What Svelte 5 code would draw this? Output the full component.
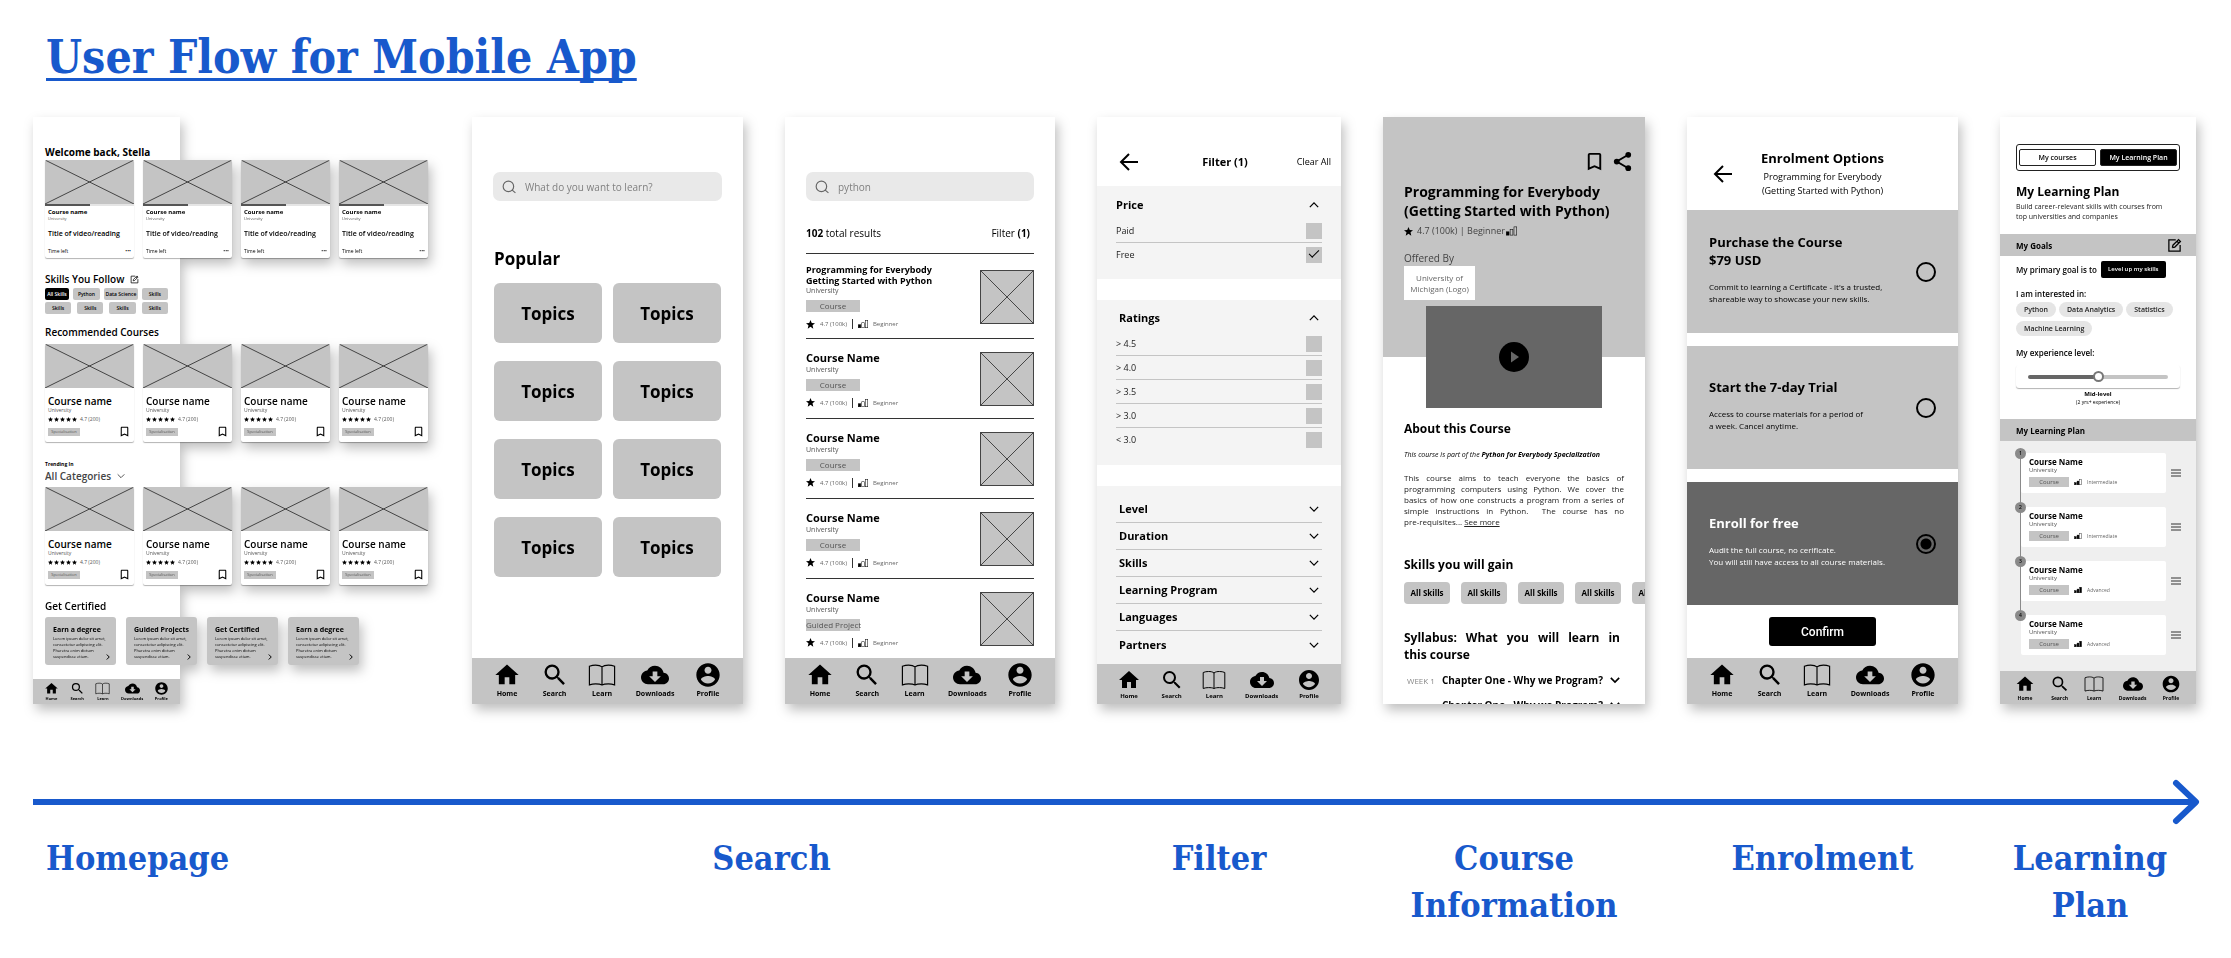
<script lang="ts">
    const navItems = ["Home", "Search", "Learn", "Downloads", "Profile"];

    const follows = [
        ["All Skills", "Python", "Data Science", "Skills"],
        ["Skills", "Skills", "Skills", "Skills"],
    ];
    const certificates = ["Earn a degree", "Guided Projects", "Get Certified", "Earn a degree"];

    const results = [
        { name: "Programming for Everybody Getting Started with Python", type: "Course", long: true },
        { name: "Course Name", type: "Course" },
        { name: "Course Name", type: "Course" },
        { name: "Course Name", type: "Course" },
        { name: "Course Name", type: "Guided Project" },
    ];

    let prices = $state([
        { label: "Paid", checked: false },
        { label: "Free", checked: true },
    ]);
    let ratings = $state([
        { label: "> 4.5", checked: false },
        { label: "> 4.0", checked: false },
        { label: "> 3.5", checked: false },
        { label: "> 3.0", checked: false },
        { label: "< 3.0", checked: false },
    ]);
    const moreFilters = ["Level", "Duration", "Skills", "Learning Program", "Languages", "Partners"];

    const options = [
        {
            id: "purchase",
            title: ["Purchase the Course", "$79 USD"],
            text: ["Commit to learning a Certificate - it's a trusted,", "shareable way to showcase your new skills."],
        },
        {
            id: "trial",
            title: ["Start the 7-day Trial"],
            text: ["Access to course materials for a period of", "a week. Cancel anytime."],
        },
        {
            id: "free",
            title: ["Enroll for free"],
            text: ["Audit the full course, no cerificate.", "You will still have access to all course materials."],
        },
    ];
    let enrolment = $state("free");

    const interests = ["Python", "Data Analytics", "Statistics", "Machine Learning"];
    let experience = $state(50);

    const plan = [
        { level: "Intermediate", bars: 2 },
        { level: "Intermediate", bars: 2 },
        { level: "Advanced", bars: 3 },
        { level: "Advanced", bars: 3 },
    ];
</script>

{#snippet navIcon(name)}
    <svg class="nav-icon" viewBox="0 0 24 24" aria-hidden="true">
        {#if name === "Home"}
            <path d="M10 20v-6h4v6h5v-8h3L12 3 2 12h3v8z" />
        {:else if name === "Search"}
            <path d="M15.5 14h-.79l-.28-.27A6.47 6.47 0 0 0 16 9.5 6.5 6.5 0 1 0 9.5 16c1.61 0 3.09-.59 4.23-1.57l.27.28v.79l5 4.99L20.49 19l-4.99-5zm-6 0a4.5 4.5 0 1 1 0-9 4.5 4.5 0 0 1 0 9z" />
        {:else if name === "Learn"}
            <path
                class="line"
                d="M12 5C10.500 3.700 8.500 3.500 6.500 3.500 4.500 3.500 3 3.800 1.200 4.500V20.500C3 19.900 4.500 19.600 6.500 19.600 8.500 19.600 10.500 19.700 12 20.500 13.500 19.700 15.500 19.600 17.500 19.600 19.500 19.600 21 19.900 22.800 20.500V4.500C21 3.800 19.500 3.500 17.500 3.500 15.500 3.500 13.500 3.700 12 5V20.500"
            />
        {:else if name === "Downloads"}
            <path d="M19.350 10.040C18.670 6.590 15.640 4 12 4 9.110 4 6.600 5.640 5.350 8.040 2.340 8.360 0 10.910 0 14c0 3.310 2.690 6 6 6h13c2.760 0 5-2.240 5-5 0-2.640-2.050-4.780-4.650-4.960zM17 13l-5 5-5-5h3V9h4v4h3z" />
        {:else}
            <path d="M12 2C6.480 2 2 6.480 2 12s4.480 10 10 10 10-4.480 10-10S17.520 2 12 2zm0 3c1.660 0 3 1.340 3 3s-1.340 3-3 3-3-1.340-3-3 1.340-3 3-3zm0 14.200c-2.500 0-4.710-1.280-6-3.220.030-1.990 4-3.080 6-3.080 1.990 0 5.970 1.090 6 3.080-1.290 1.940-3.500 3.220-6 3.220z" />
        {/if}
    </svg>
{/snippet}

{#snippet tabBar()}
    <nav class="tab-bar">
        {#each navItems as item}
            <button>
                {@render navIcon(item)}
                <span>{item}</span>
            </button>
        {/each}
    </nav>
{/snippet}

{#snippet placeholder()}
    <svg class="placeholder" viewBox="0 0 100 100" preserveAspectRatio="none" aria-hidden="true">
        <path d="M0 0L100 100M100 0L0 100" vector-effect="non-scaling-stroke" />
    </svg>
{/snippet}

{#snippet star()}
    <svg class="star" viewBox="0 0 24 24" aria-hidden="true">
        <path d="M12 18.300L19.400 23l-2-8.700L24 8.500l-8.600-.8L12 0 8.600 7.700 0 8.500l6.600 5.800L4.600 23z" />
    </svg>
{/snippet}

{#snippet bookmark()}
    <svg class="bookmark" viewBox="0 0 24 24" aria-hidden="true">
        <path d="M17 3H7c-1.100 0-1.990.9-1.990 2L5 21l7-3 7 3V5c0-1.100-.9-2-2-2zm0 15l-5-2.180L7 18V5h10v13z" />
    </svg>
{/snippet}

{#snippet bars(filled)}
    <svg class="bars" viewBox="0 0 20 16" aria-hidden="true">
        <rect x="0.500" y="9.500" width="5" height="6" class:filled={filled > 0} />
        <rect x="7.500" y="5.500" width="5" height="10" class:filled={filled > 1} />
        <rect x="14.500" y="0.500" width="5" height="15" class:filled={filled > 2} />
    </svg>
{/snippet}

{#snippet chevron(up)}
    <svg class="chevron" class:up viewBox="0 0 12 12" aria-hidden="true">
        <path d="M1 3.500L6 8.500L11 3.500" />
    </svg>
{/snippet}

{#snippet backArrow()}
    <svg class="back" viewBox="0 0 20 20" aria-hidden="true">
        <path d="M19 10H2M10 2L2 10L10 18" />
    </svg>
{/snippet}

{#snippet edit()}
    <svg class="edit" viewBox="0 0 24 24" aria-hidden="true">
        <path d="M14 3H3V21H21V11M8.500 15.500L9.500 11.500L18.500 2.500L21.500 5.500L12.500 14.500L8.500 15.500M16 5L19 8" />
    </svg>
{/snippet}

{#snippet courseRow()}
    <div class="card-row">
        {#each Array(4) as _}
            <article class="card course-card">
                {@render placeholder()}
                <h4>Course name</h4>
                <p class="school">University</p>
                <p class="score">
                    {#each Array(5) as _}{@render star()}{/each}
                    <span>4.7 (200)</span>
                </p>
                <div class="foot">
                    <span class="tag">Specialisation</span>
                    <button aria-label="Bookmark">{@render bookmark()}</button>
                </div>
            </article>
        {/each}
    </div>
{/snippet}

{#snippet searchBox(id, text, value)}
    <div class="search-box">
        <label for={id} aria-label="Search courses">
            <svg viewBox="0 0 24 24" aria-hidden="true">
                <circle cx="11" cy="11" r="9" />
                <path d="M17 17L23 22" />
            </svg>
        </label>
        <input {id} type="text" placeholder={text} {value} />
    </div>
{/snippet}

{#snippet checkRow(item)}
    <label class="check-row">
        <span>{item.label}</span>
        <input type="checkbox" bind:checked={item.checked} />
    </label>
{/snippet}

<main>
    <h1>User Flow for Mobile App</h1>

    <div class="screens">
        <section class="screen home">
            <h3>Welcome back, Stella</h3>
            <div class="card-row">
                {#each Array(4) as _}
                    <article class="card video-card">
                        {@render placeholder()}
                        <div class="progress"><div style:width="50%"></div></div>
                        <h4>Course name</h4>
                        <p class="school">University</p>
                        <p class="video">Title of video/reading</p>
                        <div class="foot">
                            <span>Time left</span>
                            <button aria-label="More">•••</button>
                        </div>
                    </article>
                {/each}
            </div>

            <h3 class="skills-title">Skills You Follow {@render edit()}</h3>
            <div class="follows">
                {#each follows as row}
                    <div>
                        {#each row as skill}
                            <button class:active={skill === "All Skills"}>{skill}</button>
                        {/each}
                    </div>
                {/each}
            </div>

            <h3 class="recommended">Recommended Courses</h3>
            {@render courseRow()}

            <label class="trending" for="category">Trending In</label>
            <div class="category">
                <select id="category"><option>All Categories</option></select>
                {@render chevron(false)}
            </div>
            {@render courseRow()}

            <h3 class="certified">Get Certified</h3>
            <div class="card-row certs">
                {#each certificates as title}
                    <article class="cert">
                        <h4>{title}</h4>
                        <p>Lorem ipsum dolor sit amet, consectetur adipiscing elit. Pharetra enim dictum suspendisse etiam.</p>
                        {@render chevron(false)}
                    </article>
                {/each}
            </div>
            {@render tabBar()}
        </section>

        <section class="screen search">
            {@render searchBox("search-empty", "What do you want to learn?", "")}
            <h3>Popular</h3>
            <div class="topics">
                {#each Array(8) as _}
                    <button>Topics</button>
                {/each}
            </div>
            {@render tabBar()}
        </section>

        <section class="screen search results">
            {@render searchBox("search-python", "", "python")}
            <div class="summary">
                <span><b>102</b> total results</span>
                <button>Filter <b>(1)</b></button>
            </div>
            {#each results as result}
                <article class="result">
                    <div>
                        <h4 class:long={result.long}>{result.name}</h4>
                        <p class="school">University</p>
                        <span class="tag">{result.type}</span>
                        <p class="meta">
                            {@render star()}
                            <span>4.7 (100k)</span>
                            <i></i>
                            {@render bars(1)}
                            <span>Beginner</span>
                        </p>
                    </div>
                    {@render placeholder()}
                </article>
            {/each}
            {@render tabBar()}
        </section>

        <section class="screen filter">
            <header>
                <button aria-label="Back">{@render backArrow()}</button>
                <h3>Filter (1)</h3>
                <button>Clear All</button>
            </header>
            <div class="group">
                <h4>Price {@render chevron(true)}</h4>
                {#each prices as item}{@render checkRow(item)}{/each}
            </div>
            <div class="group indent">
                <h4>Ratings {@render chevron(true)}</h4>
                {#each ratings as item}{@render checkRow(item)}{/each}
            </div>
            <div class="group more">
                {#each moreFilters as name}
                    <button>{name} {@render chevron(false)}</button>
                {/each}
            </div>
            {@render tabBar()}
        </section>

        <section class="screen course">
            <div class="hero">
                <div class="actions">
                    <button aria-label="Bookmark">{@render bookmark()}</button>
                    <button aria-label="Share">
                        <svg class="share" viewBox="0 0 24 24" aria-hidden="true">
                            <path d="M18 5L6 12L18 19" />
                            <circle cx="18" cy="5" r="3" />
                            <circle cx="6" cy="12" r="3" />
                            <circle cx="18" cy="19" r="3" />
                        </svg>
                    </button>
                </div>
                <h3>Programming for Everybody (Getting Started with Python)</h3>
                <p class="meta">{@render star()} <span>4.7 (100k) | Beginner</span>{@render bars(1)}</p>
                <p class="offered">Offered By</p>
                <p class="logo">University of<br />Michigan (Logo)</p>
            </div>
            <button class="video" aria-label="Play video">
                <svg viewBox="0 0 30 30" aria-hidden="true">
                    <circle cx="15" cy="15" r="15" />
                    <path d="M12 9.500V20.500L20 15z" />
                </svg>
            </button>
            <div class="details">
                <h3>About this Course</h3>
                <p class="part"><i>This course is part of the <b>Python for Everybody Specialization</b></i></p>
                <p class="about">
                    This course aims to teach everyone the basics of programming computers using Python. We cover the
                    basics of how one constructs a program from a series of simple instructions in Python.&nbsp; The
                    course has no <span>pre-requisites...</span> <a href="#about">See more</a>
                </p>
                <h3 class="gain">Skills you will gain</h3>
                <div class="chips">
                    {#each Array(5) as _}<button>All Skills</button>{/each}
                </div>
                <h3 class="syllabus">Syllabus: What you will learn in <span>this course</span></h3>
            </div>
            <div class="weeks">
                {#each [1, 2] as week}
                    <button>
                        <span>WEEK {week}</span>
                        <b>Chapter One - Why we Program?</b>
                        {@render chevron(false)}
                    </button>
                {/each}
            </div>
        </section>

        <section class="screen enrol">
            <header>
                <button aria-label="Back">{@render backArrow()}</button>
                <div>
                    <h3>Enrolment Options</h3>
                    <p>Programming for Everybody<br />(Getting Started with Python)</p>
                </div>
            </header>
            {#each options as option}
                <label class="option" class:selected={enrolment === option.id}>
                    <span>
                        <b>{option.title.join("\n")}</b>
                        <small>{option.text.join("\n")}</small>
                    </span>
                    <input type="radio" name="enrolment" value={option.id} bind:group={enrolment} />
                </label>
            {/each}
            <button class="confirm">Confirm</button>
            {@render tabBar()}
        </section>

        <section class="screen plan">
            <div class="pad">
                <div class="toggle">
                    <button>My courses</button>
                    <button class="active">My Learning Plan</button>
                </div>
                <h3>My Learning Plan</h3>
                <p class="intro">Build career-relevant skills with courses from<br />top universities and companies</p>
            </div>
            <h4 class="bar">My Goals {@render edit()}</h4>
            <div class="pad">
                <div class="goal">
                    <span>My primary goal is to</span>
                    <button>Level up my skills</button>
                </div>
                <p class="ask interest">I am interested in:</p>
                <div class="interests">
                    {#each interests as interest}<button>{interest}</button>{/each}
                </div>
                <label class="ask" for="experience">My experience level:</label>
                <div class="slider">
                    <input id="experience" type="range" bind:value={experience} style:--value={`${experience}%`} />
                </div>
                <p class="level">Mid-level</p>
                <p class="years">(2 yrs+ experience)</p>
            </div>
            <h4 class="bar">My Learning Plan</h4>
            <ol>
                {#each plan as step, i}
                    <li>
                        <div class="step">
                            <span class="number">{i + 1}</span>
                            <h5>Course Name</h5>
                            <p class="school">University</p>
                            <p class="meta">
                                <span class="tag">Course</span>
                                {@render bars(step.bars)}
                                <span>{step.level}</span>
                            </p>
                        </div>
                        <button aria-label="Reorder">
                            <svg viewBox="0 0 10 8" aria-hidden="true"><path d="M0 1H10M0 4H10M0 7H10" /></svg>
                        </button>
                    </li>
                {/each}
            </ol>
            {@render tabBar()}
        </section>
    </div>

    <svg class="arrow" aria-hidden="true">
        <line x1="0" y1="23" x2="100%" y2="23" />
        <svg x="100%" overflow="visible"><path d="M-20 4L0 23L-20 42" /></svg>
    </svg>

    <div class="labels">
        <h2 class="first">Homepage</h2>
        <h2 class="wide">Search</h2>
        <h2>Filter</h2>
        <h2>Course Information</h2>
        <h2>Enrolment</h2>
        <h2 class="last">Learning Plan</h2>
    </div>
</main>

<style>
    :global(body) {
        margin: 0;
        background: #fff;
    }

    main {
        padding: 27px 35px 20px 33px;
        font-family: "Open Sans", sans-serif;
        color: #000;
        box-sizing: border-box;
    }

    h1, h2, h3, h4, h5, p, ol {
        margin: 0;
        padding: 0;
    }

    button, input, select {
        font: inherit;
        color: inherit;
        background: none;
        border: 0;
        margin: 0;
        padding: 0;
        border-radius: 0;
    }

    button {
        cursor: pointer;
    }

    svg {
        display: block;
        flex: none;
    }

    h1, h2 {
        font-family: "DejaVu Serif Condensed", "DejaVu Serif", serif;
        font-weight: 700;
        color: #1859cc;
    }

    h1 {
        padding-left: 13px;
        margin-bottom: 30px;
        font-size: 46px;
        line-height: 60px;
        text-decoration: underline;
        text-decoration-thickness: 3px;
        text-underline-offset: 5px;
        text-decoration-skip-ink: none;
    }

    .screens, .labels {
        display: grid;
        grid-template-columns: 397fr 271fr 270fr 244fr 262fr 271fr 196fr;
        gap: 42px;
    }

    .screen {
        --icon: 28px;
        --label: 7px;
        --nav-side: 21px;
        --nav-height: 46px;
        --nav-top: 3px;
        display: flex;
        flex-direction: column;
        min-width: 0;
        background: #fff;
        filter: drop-shadow(3px 6px 6px rgba(0, 0, 0, 0.25));
    }

    /* Shared pieces */
    .tab-bar {
        display: flex;
        justify-content: space-between;
        align-items: flex-start;
        box-sizing: border-box;
        height: var(--nav-height);
        margin-top: auto;
        padding: var(--nav-top) var(--nav-side) 0;
        background: #c4c4c4;
    }

    .tab-bar button {
        display: flex;
        flex-direction: column;
        align-items: center;
        font-size: var(--label);
        line-height: 9px;
        font-weight: 700;
    }

    .nav-icon {
        width: var(--icon);
        height: var(--icon);
    }

    .nav-icon .line {
        fill: none;
        stroke: #000;
        stroke-width: 1;
    }

    .placeholder {
        background: #c4c4c4;
    }

    .placeholder path {
        stroke: #444;
        stroke-width: 1;
    }

    .bars rect {
        fill: none;
        stroke: #000;
        stroke-width: 1;
    }

    .bars rect.filled {
        fill: #000;
    }

    .chevron path, .back path, .edit path {
        fill: none;
        stroke: #000;
    }

    .chevron path {
        stroke-width: 2;
    }

    .chevron.up {
        transform: rotate(180deg);
    }

    .back path {
        stroke-width: 2;
    }

    .edit path {
        stroke-width: 2;
    }

    .tag {
        background: #c4c4c4;
        color: #555;
        text-align: center;
    }

    .school {
        color: #555;
    }

    /* Homepage */
    .home {
        --icon: 15px;
        --label: 4px;
        --nav-side: 11px;
        --nav-height: 25px;
        --nav-top: 2px;
        width: 37%;
        padding-top: 28px;
    }

    .home .tab-bar button {
        line-height: 6px;
    }

    .home h3 {
        margin: 0 12px 1px;
        font-size: 10px;
        line-height: 14px;
        font-weight: 700;
        white-space: nowrap;
    }

    .home .skills-title {
        display: flex;
        align-items: center;
        gap: 6px;
        margin-top: 14px;
        margin-bottom: 2px;
        font-weight: 600;
    }

    .skills-title .edit {
        width: 9px;
        height: 9px;
    }

    .home .recommended {
        margin-top: 11px;
        margin-bottom: 5px;
        font-weight: 600;
    }

    .home .certified {
        margin-top: 14px;
        margin-bottom: 4px;
        font-weight: 600;
    }

    .card-row {
        display: flex;
        gap: 9px;
        padding-left: 12px;
    }

    .card {
        display: flex;
        flex: none;
        flex-direction: column;
        width: 89px;
        height: 98px;
        background: #fff;
        border-radius: 2px;
        box-shadow: 0 1px 1px rgba(0, 0, 0, 0.3);
        overflow: hidden;
    }

    .card .placeholder {
        width: 100%;
        height: 44px;
    }

    .card h4, .card p, .card .foot {
        padding: 0 3px;
    }

    .card .school {
        font-size: 4px;
        line-height: 6px;
    }

    .card .foot {
        display: flex;
        justify-content: space-between;
        align-items: center;
    }

    .progress {
        height: 2px;
        background: #e5e5e5;
    }

    .progress div {
        height: 100%;
        background: #555;
    }

    .video-card h4 {
        margin-top: 2px;
        font-size: 6px;
        line-height: 8px;
        font-weight: 700;
    }

    .video-card .video {
        margin-top: 7px;
        font-size: 7px;
        line-height: 10px;
        font-weight: 600;
    }

    .video-card .foot {
        margin-top: 8px;
        font-size: 5px;
        line-height: 8px;
    }

    .course-card h4 {
        margin-top: 7px;
        font-size: 10px;
        line-height: 12px;
        font-weight: 600;
    }

    .course-card .school {
        font-size: 5px;
    }

    .course-card .score {
        display: flex;
        align-items: center;
        gap: 1px;
        margin-top: 3px;
        font-size: 5px;
        line-height: 7px;
        color: #555;
    }

    .course-card .score span {
        margin-left: 2px;
    }

    .course-card .star {
        width: 5px;
        height: 5px;
    }

    .course-card .foot {
        margin-top: 2px;
    }

    .course-card .tag {
        width: 32px;
        font-size: 4px;
        line-height: 8px;
    }

    .course-card .bookmark {
        width: 13px;
        height: 13px;
    }

    .follows {
        display: grid;
        gap: 2px;
        padding: 0 12px;
    }

    .follows div {
        display: grid;
        grid-template-columns: 24fr 27fr 34fr 26fr;
        gap: 4px;
    }

    .follows div:last-child {
        grid-template-columns: repeat(4, 1fr);
        gap: 6px;
    }

    .follows button {
        min-width: 0;
        font-size: 5px;
        line-height: 12px;
        font-weight: 600;
        white-space: nowrap;
        background: #c4c4c4;
        border-radius: 2px;
    }

    .follows button.active {
        color: #fff;
        background: #000;
    }

    .trending {
        margin: 18px 12px 0;
        font-size: 5px;
        line-height: 8px;
        font-weight: 700;
    }

    .category {
        display: flex;
        align-items: center;
        gap: 5px;
        margin: 1px 12px 4px;
        height: 14px;
    }

    .category select {
        appearance: none;
        font-size: 10px;
        line-height: 14px;
        font-weight: 600;
        color: #444;
    }

    .category .chevron {
        width: 8px;
        height: 8px;
    }

    .category .chevron path {
        stroke-width: 1;
    }

    .certs {
        gap: 10px;
        margin-bottom: 14px;
    }

    .cert {
        display: flex;
        flex: none;
        flex-direction: column;
        box-sizing: border-box;
        width: 71px;
        height: 48px;
        padding: 8px 5px 0 8px;
        background: #c4c4c4;
        border-radius: 3px;
    }

    .cert h4 {
        font-size: 7px;
        line-height: 9px;
        font-weight: 700;
        white-space: nowrap;
    }

    .cert p {
        margin-top: 2px;
        font-size: 4px;
        line-height: 6px;
    }

    .cert .chevron {
        align-self: flex-end;
        width: 6px;
        height: 6px;
        margin-top: -6px;
        transform: rotate(-90deg);
    }

    /* Search */
    .search {
        padding-top: 55px;
    }

    .search-box {
        display: flex;
        align-items: center;
        gap: 9px;
        height: 29px;
        margin: 0 21px;
        padding: 0 9px;
        background: #e9e9e9;
        border-radius: 7px;
    }

    .search-box svg {
        width: 14px;
        height: 14px;
        fill: none;
        stroke: #666;
        stroke-width: 2;
    }

    .search-box input {
        flex: 1;
        min-width: 0;
        font-size: 10px;
        color: #808080;
        outline: none;
    }

    .search-box input::placeholder {
        color: #808080;
        opacity: 1;
    }

    .search h3 {
        margin: 46px 22px 12px;
        font-size: 17px;
        line-height: 24px;
        font-weight: 700;
    }

    .topics {
        display: grid;
        grid-template-columns: 1fr 1fr;
        gap: 18px 11px;
        margin: 0 22px;
    }

    .topics button {
        height: 60px;
        font-size: 17px;
        font-weight: 700;
        background: #c4c4c4;
        border-radius: 6px;
    }

    .summary {
        display: flex;
        justify-content: space-between;
        margin: 26px 21px 0;
        padding: 0 4px 14px 0;
        font-size: 10px;
        line-height: 12px;
    }

    .result {
        display: flex;
        justify-content: space-between;
        align-items: center;
        box-sizing: border-box;
        min-height: 80px;
        margin: 0 21px;
        padding: 10px 0 9px;
        border-top: 1px solid #333;
    }

    .result .placeholder {
        box-sizing: border-box;
        width: 54px;
        height: 54px;
        border: 1px solid #444;
    }

    .result h4 {
        font-size: 11px;
        line-height: 14px;
        font-weight: 700;
    }

    .result h4.long {
        max-width: 134px;
        font-size: 9px;
        line-height: 11px;
    }

    .result .school {
        font-size: 7px;
        line-height: 10px;
    }

    .result .tag {
        display: block;
        width: 54px;
        margin-top: 4px;
        font-size: 8px;
        line-height: 12px;
        white-space: nowrap;
    }

    .result .meta {
        display: flex;
        align-items: center;
        gap: 5px;
        margin-top: 7px;
        font-size: 6px;
        line-height: 10px;
        color: #666;
    }

    .result .meta i {
        width: 1px;
        height: 10px;
        background: #333;
    }

    .result .star {
        width: 9px;
        height: 9px;
    }

    .result .bars {
        width: 10px;
        height: 8px;
    }

    /* Filter */
    .filter {
        --icon: 24px;
        --label: 6px;
        --nav-side: 20px;
        --nav-height: 40px;
        --nav-top: 4px;
    }

    .filter header {
        display: grid;
        grid-template-columns: 1fr auto 1fr;
        align-items: center;
        height: 49px;
        padding: 20px 10px 0 22px;
        font-size: 9px;
    }

    .filter header button {
        justify-self: start;
    }

    .filter header button:last-child {
        justify-self: end;
    }

    .back {
        width: 20px;
        height: 20px;
    }

    .filter h3, .filter h4, .more button {
        font-size: 11px;
        line-height: 16px;
        font-weight: 700;
    }

    .group {
        margin-bottom: 21px;
        padding: 11px 19px 13px;
        background: #f4f4f4;
    }

    .group h4 {
        display: flex;
        justify-content: space-between;
        align-items: center;
        padding: 0 3px 6px 0;
    }

    .group .chevron {
        width: 10px;
        height: 10px;
    }

    .group .chevron path {
        stroke-width: 1.500;
    }

    .indent {
        padding-top: 10px;
        padding-bottom: 14px;
    }

    .indent h4 {
        padding-left: 3px;
    }

    .check-row {
        display: flex;
        justify-content: space-between;
        align-items: center;
        height: 23px;
        font-size: 9px;
        line-height: 12px;
        color: #222;
    }

    .check-row + .check-row {
        border-top: 1px solid #c4c4c4;
    }

    .check-row input {
        appearance: none;
        display: grid;
        place-items: center;
        width: 16px;
        height: 16px;
        background: #c4c4c4;
    }

    .check-row input:checked::before {
        content: "";
        width: 9px;
        height: 4px;
        margin-bottom: 4px;
        border: solid #000;
        border-width: 0 0 1px 1px;
        transform: rotate(-45deg);
    }

    .more {
        margin-bottom: 0;
        padding: 10px 19px 6px;
    }

    .more button {
        display: flex;
        justify-content: space-between;
        align-items: center;
        width: 100%;
        height: 27px;
        padding: 0 3px;
        border-bottom: 1px solid #c4c4c4;
    }

    .more button:last-child {
        border-bottom: 0;
    }

    /* Course information */
    .course {
        overflow: hidden;
    }

    .hero {
        padding: 33px 11px 57px 21px;
        background: #c4c4c4;
    }

    .actions {
        display: flex;
        justify-content: flex-end;
        gap: 5px;
        height: 23px;
    }

    .actions svg {
        width: 23px;
        height: 23px;
    }

    .share path {
        fill: none;
        stroke: #000;
        stroke-width: 2;
    }

    .hero h3 {
        max-width: 220px;
        margin-top: 9px;
        font-size: 14px;
        line-height: 19px;
        font-weight: 700;
    }

    .hero .meta {
        display: flex;
        align-items: center;
        margin-top: 4px;
        font-size: 9px;
        line-height: 14px;
        color: #444;
    }

    .hero .star {
        width: 9px;
        height: 9px;
        margin-right: 4px;
    }

    .hero .bars {
        width: 11px;
        height: 10px;
        margin-left: 1px;
    }

    .hero .offered {
        margin: 13px 0 1px;
        font-size: 10px;
        line-height: 14px;
        color: #444;
    }

    .hero .logo {
        width: 71px;
        padding: 6px 0;
        font-size: 8px;
        line-height: 11px;
        text-align: center;
        color: #666;
        background: #fff;
    }

    .course .video {
        display: grid;
        place-items: center;
        height: 102px;
        margin: -51px 43px 0;
        background: #666;
    }

    .course .video svg {
        width: 30px;
        height: 30px;
    }

    .course .video path {
        fill: #666;
    }

    .details {
        padding: 12px 21px 0;
    }

    .details h3 {
        font-size: 12px;
        line-height: 18px;
        font-weight: 700;
    }

    .details .part {
        margin-top: 12px;
        font-size: 7px;
        line-height: 10px;
        white-space: nowrap;
    }

    .details .about {
        margin-top: 12px;
        font-size: 8px;
        line-height: 11px;
        text-align: justify;
        color: #222;
    }

    .about span, .syllabus span {
        white-space: nowrap;
    }

    .about a {
        color: inherit;
    }

    .details .gain {
        margin-top: 29px;
    }

    .chips {
        display: flex;
        gap: 11px;
        margin-top: 8px;
    }

    .chips button {
        flex: none;
        width: 46px;
        font-size: 8px;
        line-height: 22px;
        font-weight: 700;
        background: #c4c4c4;
        border-radius: 4px;
    }

    .details .syllabus {
        margin: 25px 4px 0 0;
        line-height: 17px;
        text-align: justify;
    }

    .weeks {
        flex: 1 1 0;
        min-height: 0;
        padding: 10px 25px 0 24px;
        overflow: hidden;
    }

    .weeks button {
        display: flex;
        justify-content: space-between;
        align-items: center;
        width: 100%;
        height: 14px;
        margin-bottom: 11px;
        font-size: 8px;
        color: #888;
    }

    .weeks b {
        font-size: 10px;
        color: #000;
    }

    .weeks .chevron {
        width: 10px;
        height: 10px;
    }

    /* Enrolment */
    .enrol header {
        display: grid;
        grid-template-columns: 1fr auto 1fr;
        align-items: center;
        padding: 32px 26px 12px;
    }

    .enrol header button {
        justify-self: start;
    }

    .enrol h3 {
        font-size: 13px;
        line-height: 18px;
        font-weight: 700;
        text-align: center;
    }

    .enrol header p {
        margin-top: 3px;
        font-size: 9px;
        line-height: 14px;
        text-align: center;
    }

    .option {
        display: flex;
        justify-content: space-between;
        align-items: center;
        height: 123px;
        margin-bottom: 13px;
        padding: 0 22px;
        background: #c4c4c4;
        white-space: pre-line;
    }

    .option span {
        padding-bottom: 6px;
    }

    .option b, .option small {
        display: block;
    }

    .option b {
        font-size: 13px;
        line-height: 18px;
    }

    .option small {
        margin-top: 12px;
        font-size: 8px;
        line-height: 12px;
    }

    .option.selected {
        margin-bottom: 12px;
        color: #fff;
        background: #666;
    }

    .option input {
        appearance: none;
        box-sizing: border-box;
        flex: none;
        width: 20px;
        height: 20px;
        border: 2px solid #000;
        border-radius: 50%;
    }

    .option input:checked {
        background: radial-gradient(circle, #000 5px, transparent 6px);
    }

    .confirm {
        align-self: center;
        width: 107px;
        height: 29px;
        font-family: Roboto, sans-serif;
        font-size: 12px;
        font-weight: 500;
        color: #fff;
        background: #000;
        border-radius: 3px;
    }

    /* Learning plan */
    .plan {
        --icon: 20px;
        --label: 5px;
        --nav-side: 15px;
        --nav-height: 33px;
        --nav-top: 3px;
        padding-top: 27px;
    }

    .plan .tab-bar button {
        line-height: 8px;
    }

    .pad {
        padding: 0 16px;
    }

    .toggle {
        display: flex;
        gap: 4px;
        box-sizing: border-box;
        height: 27px;
        padding: 4px 2px;
        border: 1px solid #222;
        border-radius: 3px;
    }

    .toggle button {
        flex: 1 1 0;
        font-size: 7px;
        font-weight: 600;
        border: 1px solid #222;
        border-radius: 2px;
    }

    .toggle .active {
        color: #fff;
        background: #000;
    }

    .plan h3 {
        margin-top: 13px;
        font-size: 12px;
        line-height: 16px;
        font-weight: 700;
    }

    .plan .intro {
        margin: 2px 0 12px;
        font-size: 7px;
        line-height: 10px;
        color: #222;
        white-space: nowrap;
    }

    .plan .bar {
        display: flex;
        justify-content: space-between;
        align-items: center;
        height: 22px;
        padding: 0 14px 0 16px;
        font-size: 8px;
        font-weight: 700;
        background: #c4c4c4;
    }

    .bar .edit {
        width: 15px;
        height: 15px;
    }

    .goal {
        display: flex;
        align-items: center;
        gap: 4px;
        margin-top: 5px;
        font-size: 8px;
        font-weight: 600;
        white-space: nowrap;
    }

    .goal button {
        padding: 0 7px;
        font-size: 6px;
        line-height: 17px;
        font-weight: 600;
        color: #fff;
        background: #000;
        border-radius: 2px;
    }

    .ask {
        display: block;
        font-size: 8px;
        line-height: 10px;
        font-weight: 600;
    }

    .interest {
        margin: 11px 0 3px;
    }

    .interests {
        display: flex;
        flex-wrap: wrap;
        gap: 4px 3px;
        margin-bottom: 12px;
    }

    .interests button {
        padding: 0 8px;
        font-size: 7px;
        line-height: 15px;
        font-weight: 600;
        color: #222;
        background: #e5e5e5;
        border-radius: 8px;
    }

    .slider {
        display: flex;
        align-items: center;
        height: 23px;
        margin-top: 7px;
        padding: 0 12px;
        border-radius: 3px;
        box-shadow: 0 1px 1px rgba(0, 0, 0, 0.3);
    }

    .slider input {
        appearance: none;
        width: 100%;
        height: 4px;
        border-radius: 2px;
        background: linear-gradient(90deg, #666 var(--value), #c4c4c4 var(--value));
    }

    .slider input::-webkit-slider-thumb {
        appearance: none;
        box-sizing: border-box;
        width: 11px;
        height: 11px;
        border: 2px solid #777;
        border-radius: 50%;
        background: #fff;
    }

    .level, .years {
        text-align: center;
    }

    .level {
        margin-top: 2px;
        font-size: 6px;
        line-height: 8px;
        font-weight: 700;
    }

    .years {
        margin-bottom: 13px;
        font-size: 5px;
        line-height: 8px;
    }

    .plan ol {
        display: flex;
        flex: 1;
        flex-direction: column;
        gap: 14px;
        padding: 12px 15px 0 21px;
        list-style: none;
        background: #efefef;
    }

    .plan li {
        display: flex;
        align-items: center;
        gap: 5px;
        position: relative;
    }

    .plan li:not(:last-child)::before {
        content: "";
        position: absolute;
        left: -1px;
        top: 0;
        z-index: 1;
        width: 1px;
        height: calc(100% + 14px);
        background: #8a8a8a;
    }

    .step {
        flex: 1;
        box-sizing: border-box;
        height: 40px;
        padding: 4px 8px 0;
        background: #fff;
        border-radius: 2px;
    }

    .number {
        position: absolute;
        left: -6px;
        top: -5px;
        z-index: 2;
        width: 11px;
        font-size: 5px;
        line-height: 11px;
        font-weight: 600;
        text-align: center;
        background: #8a8a8a;
        border-radius: 50%;
    }

    .step h5 {
        font-size: 8px;
        line-height: 10px;
        font-weight: 700;
    }

    .step .school {
        font-size: 6px;
        line-height: 7px;
    }

    .step .meta {
        display: flex;
        align-items: center;
        gap: 5px;
        margin-top: 3px;
        font-size: 5px;
        line-height: 10px;
        color: #666;
    }

    .step .tag {
        width: 40px;
        font-size: 6px;
    }

    .step .bars {
        width: 8px;
        height: 6px;
    }

    .plan li svg:not(.bars) {
        width: 10px;
        height: 8px;
        stroke: #333;
        stroke-width: 1;
    }

    /* Timeline */
    .arrow {
        width: 100%;
        height: 46px;
        margin: 75px 0 10px;
        overflow: visible;
        fill: none;
        stroke: #1859cc;
        stroke-width: 6;
        stroke-linecap: round;
        stroke-linejoin: round;
    }

    .arrow line {
        stroke-linecap: butt;
    }

    .labels h2 {
        font-size: 34px;
        line-height: 47px;
        text-align: center;
    }

    .labels .first {
        padding-left: 13px;
        text-align: left;
    }

    .labels .wide {
        grid-column: span 2;
        padding-left: 16px;
    }

    .labels .last {
        margin: 0 0 0 -16px;
    }
</style>
